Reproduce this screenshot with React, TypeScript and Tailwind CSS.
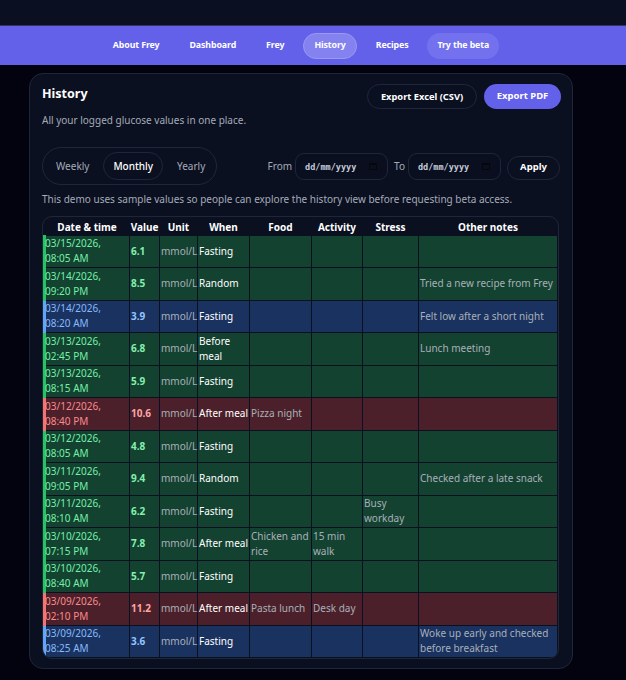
const rows = [
  { date: "03/15/2026,", time: "08:05 AM", value: "6.1", when: "Fasting", tone: "green" },
  { date: "03/14/2026,", time: "09:20 PM", value: "8.5", when: "Random", notes: "Tried a new recipe from Frey", tone: "green" },
  { date: "03/14/2026,", time: "08:20 AM", value: "3.9", when: "Fasting", notes: "Felt low after a short night", tone: "blue" },
  { date: "03/13/2026,", time: "02:45 PM", value: "6.8", when: "Before meal", notes: "Lunch meeting", tone: "green" },
  { date: "03/13/2026,", time: "08:15 AM", value: "5.9", when: "Fasting", tone: "green" },
  { date: "03/12/2026,", time: "08:40 PM", value: "10.6", when: "After meal", food: "Pizza night", tone: "red" },
  { date: "03/12/2026,", time: "08:05 AM", value: "4.8", when: "Fasting", tone: "green" },
  { date: "03/11/2026,", time: "09:05 PM", value: "9.4", when: "Random", notes: "Checked after a late snack", tone: "green" },
  { date: "03/11/2026,", time: "08:10 AM", value: "6.2", when: "Fasting", stress: "Busy workday", tone: "green" },
  { date: "03/10/2026,", time: "07:15 PM", value: "7.8", when: "After meal", food: "Chicken and rice", activity: "15 min walk", tone: "green" },
  { date: "03/10/2026,", time: "08:40 AM", value: "5.7", when: "Fasting", tone: "green" },
  { date: "03/09/2026,", time: "02:10 PM", value: "11.2", when: "After meal", food: "Pasta lunch", activity: "Desk day", tone: "red" },
  { date: "03/09/2026,", time: "08:25 AM", value: "3.6", when: "Fasting", notes: "Woke up early and checked before breakfast", tone: "blue" },
];

const tones: Record<string, { row: string; date: string; value: string; bar: string }> = {
  green: { row: "bg-[#134231]", date: "text-[#74f0a8]", value: "text-[#86efac]", bar: "border-l-[#22c55e]" },
  blue: { row: "bg-[#1a3260]", date: "text-[#85bbfc]", value: "text-[#93c5fd]", bar: "border-l-[#60a5fa]" },
  red: { row: "bg-[#4c202a]", date: "text-[#fb8a8a]", value: "text-[#fca5a5]", bar: "border-l-[#f87171]" },
};

const navItems = ["About Frey", "Dashboard", "Frey", "History", "Recipes", "Try the beta"];
const headers = ["Date & time", "Value", "Unit", "When", "Food", "Activity", "Stress", "Other notes"];

function DateField() {
  return (
    <div className="flex h-[27px] w-[93px] items-center justify-between rounded-[9px] border border-[#20263a] bg-[#0a0f1f] pl-[9px] pr-[10px]">
      <span className="pt-[2px] font-['DejaVu_Sans_Mono',monospace] text-[8.5px] font-bold text-[#c3cad8]">dd/mm/yyyy</span>
      <svg width="8" height="8" viewBox="0 0 8 8" className="text-[#05070d]">
        <path d="M0 1h8v7H0z M1 3v4h6V3z" fill="currentColor" fillRule="evenodd" />
      </svg>
    </div>
  );
}

export default function App() {
  return (
    <div className="h-[680px] overflow-hidden bg-[#02030f] font-['Noto_Sans',sans-serif] text-[10px] text-white">
      <div className="h-[25px] bg-[#0a1022]" />
      <nav className="flex h-[40px] items-center justify-center gap-[8px] border-t border-[#34345f] bg-[#6360ea] pr-[25px] pt-[1px] text-[8.8px] font-bold tracking-[-0.1px]">
        {navItems.map((item) => (
          <span
            key={item}
            className={
              item === "History"
                ? "flex h-[26px] items-center rounded-full border border-[#9a98f2] bg-[#8482ef] px-[10px]"
                : item === "Try the beta"
                  ? "flex h-[26px] items-center rounded-full bg-[#7371ed] px-[10px]"
                  : "flex h-[26px] items-center px-[11px]"
            }
          >
            {item}
          </span>
        ))}
      </nav>
      <main className="ml-[29px] mt-[8px] h-[596px] w-[544px] rounded-[14px] border border-[#20263a] bg-[#0b1020] pl-[12px] pr-[11px] pt-[10px]">
        <div className="flex items-start justify-between">
          <div>
            <h1 className="text-[12.5px] font-bold leading-[19px]">History</h1>
            <p className="mt-[10px] leading-[14px] text-[#a4abb8]">All your logged glucose values in one place.</p>
          </div>
          <div className="flex gap-[7px]">
            <button className="h-[25px] w-[110px] rounded-full border border-[#20263a] text-[9.3px] font-bold">Export Excel (CSV)</button>
            <button className="h-[25px] w-[77px] rounded-full bg-[#6360ea] text-[9.5px] font-bold">Export PDF</button>
          </div>
        </div>

        <div className="mr-[1px] mt-[20px] flex items-center justify-between">
          <div className="flex h-[38px] w-[175px] items-center rounded-full border border-[#20263a] px-[4px] text-[#a4abb8]">
            <span className="px-[9px]">Weekly</span>
            <span className="ml-[5px] flex h-[28px] items-center rounded-full border border-[#20263a] px-[9px] font-medium text-white">Monthly</span>
            <span className="px-[14px]">Yearly</span>
          </div>
          <div className="flex items-center gap-[3px] text-[#a4abb8]">
            <span>From</span>
            <DateField />
            <span className="ml-[3px]">To</span>
            <DateField />
            <button className="ml-[3px] mt-[3px] h-[24px] w-[53px] rounded-full border border-[#20263a] text-[9.5px] font-bold text-white">Apply</button>
          </div>
        </div>

        <p className="mt-[7px] leading-[14px] text-[#a4abb8]">
          This demo uses sample values so people can explore the history view before requesting beta access.
        </p>

        <div className="mt-[10px] w-[517px] overflow-hidden rounded-[10px] border border-[#20263a]">
          <table className="w-full table-fixed border-collapse">
            <colgroup>
              <col className="w-[85px]" />
              <col className="w-[30px]" />
              <col className="w-[38px]" />
              <col className="w-[52px]" />
              <col className="w-[62px]" />
              <col className="w-[51px]" />
              <col className="w-[56px]" />
              <col />
            </colgroup>
            <thead>
              <tr className="h-[18px]">
                {headers.map((h) => (
                  <th key={h} className="px-0 pb-0 pt-[4px] text-center text-[10px] font-bold leading-[13px]">{h}</th>
                ))}
              </tr>
            </thead>
            <tbody className="text-[10px] leading-[15px]">
              {rows.map((r) => {
                const tone = tones[r.tone];
                const cell = "border border-[#0b1020] px-[1px] py-0 text-[#a8b0b8]";
                return (
                  <tr key={r.date + r.time} className={`h-[32.5px] ${tone.row}`}>
                    <td className={`border-y border-r border-l-[3px] border-y-[#0b1020] border-r-[#0b1020] p-0 ${tone.bar} ${tone.date}`}>
                      <div className="-ml-[1px]">{r.date}</div>
                      <div className="-ml-[1px]">{r.time}</div>
                    </td>
                    <td className={`border border-[#0b1020] pl-[1px] font-bold ${tone.value}`}>{r.value}</td>
                    <td className={`${cell} whitespace-nowrap`}>mmol/L</td>
                    <td className={`${cell} text-white`}>{r.when}</td>
                    <td className={cell}>{r.food}</td>
                    <td className={cell}>{r.activity}</td>
                    <td className={cell}>{r.stress}</td>
                    <td className={cell}>{r.notes}</td>
                  </tr>
                );
              })}
            </tbody>
          </table>
        </div>
      </main>
    </div>
  );
}
